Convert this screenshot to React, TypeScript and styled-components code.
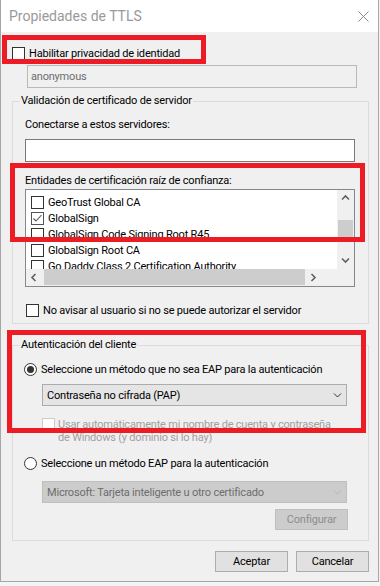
import React from 'react';
import styled, { createGlobalStyle } from 'styled-components';

const GlobalStyle = createGlobalStyle`
  * { box-sizing: border-box; }
  html, body { margin: 0; padding: 0; }
  body {
    background: #f4f4f4;
    font-family: Roboto, 'Liberation Sans', sans-serif;
    font-size: 11px;
    letter-spacing: -0.2px;
    color: #000;
  }
`;

const certs = [
  { name: 'GeoTrust Global CA', checked: false },
  { name: 'GlobalSign', checked: true },
  { name: 'GlobalSign Code Signing Root R45', checked: false },
  { name: 'GlobalSign Root CA', checked: false },
  { name: 'Go Daddy Class 2 Certification Authority', checked: false },
];

type Dir = 'up' | 'down' | 'left' | 'right';

const chevronPaths: Record<Dir, string> = {
  up: 'M1 5.5 L4.5 2 L8 5.5',
  down: 'M1 2.5 L4.5 6 L8 2.5',
  left: 'M5.5 1 L2 4.5 L5.5 8',
  right: 'M2.5 1 L6 4.5 L2.5 8',
};

const Chevron = ({ dir, color = '#606060', width = 1.6 }: { dir: Dir; color?: string; width?: number }) => (
  <svg width="9" height="9" viewBox="0 0 9 9">
    <path d={chevronPaths[dir]} fill="none" stroke={color} strokeWidth={width} />
  </svg>
);

const Check = ({ checked, disabled }: { checked?: boolean; disabled?: boolean }) => (
  <CheckBox $disabled={disabled} $checked={checked}>
    {checked && (
      <svg width="11" height="11" viewBox="0 0 11 11">
        <path d="M1.5 5.5 L4 8 L9.5 2" fill="none" stroke="#555" strokeWidth="1.1" />
      </svg>
    )}
  </CheckBox>
);

const App = () => {
  return (
    <>
      <GlobalStyle />
      <Window>
        <TitleBar>
          <Title>Propiedades de TTLS</Title>
          <CloseButton>
            <svg width="11" height="11" viewBox="0 0 11 11">
              <path d="M0.5 0.5 L10.5 10.5 M10.5 0.5 L0.5 10.5" stroke="#8a8a8a" strokeWidth="1" />
            </svg>
          </CloseButton>
        </TitleBar>

        <Body>
          <CheckRow $top={13}>
            <Check />
            <span>Habilitar privacidad de identidad</span>
          </CheckRow>
          <IdentityInput>anonymous</IdentityInput>

          <Group $top={5}>
            <Legend>Validación de certificado de servidor</Legend>
            <GroupContent $left={12} $bottom={5}>
              <Label $top={8}>Conectarse a estos servidores:</Label>
              <TextField />
              <Label $top={11}>Entidades de certificación raíz de confianza:</Label>
              <ListBox>
                <ListMain>
                  <Rows>
                    {certs.map((c) => (
                      <ListRow key={c.name}>
                        <Check checked={c.checked} />
                        <span>{c.name}</span>
                      </ListRow>
                    ))}
                  </Rows>
                  <VScroll>
                    <ArrowCell>
                      <Chevron dir="up" />
                    </ArrowCell>
                    <VTrack>
                      <VThumb />
                    </VTrack>
                    <ArrowCell>
                      <Chevron dir="down" />
                    </ArrowCell>
                  </VScroll>
                </ListMain>
                <HScroll>
                  <HArrow>
                    <Chevron dir="left" />
                  </HArrow>
                  <HThumb />
                  <HArrow>
                    <Chevron dir="right" />
                  </HArrow>
                  <Corner />
                </HScroll>
              </ListBox>
              <CheckRow $top={15} $indent={1}>
                <Check />
                <span>No avisar al usuario si no se puede autorizar el servidor</span>
              </CheckRow>
            </GroupContent>
          </Group>

          <Group $top={13}>
            <Legend>Autenticación del cliente</Legend>
            <GroupContent $left={11} $bottom={10}>
              <RadioRow $top={8}>
                <Radio $checked />
                <span>Seleccione un método que no sea EAP para la autenticación</span>
              </RadioRow>
              <Combo $top={7}>
                <span>Contraseña no cifrada (PAP)</span>
                <Chevron dir="down" color="#333" width={1} />
              </Combo>
              <DisabledRow>
                <Check disabled />
                <DisabledText>
                  Usar automáticamente mi nombre de cuenta y contraseña
                  <br />
                  de Windows (y dominio si lo hay)
                </DisabledText>
              </DisabledRow>
              <RadioRow $top={11}>
                <Radio />
                <span>Seleccione un método EAP para la autenticación</span>
              </RadioRow>
              <Combo $top={10} $disabled>
                <span>Microsoft: Tarjeta inteligente u otro certificado</span>
                <Chevron dir="down" color="#b5b5b5" width={1} />
              </Combo>
              <ConfigRow>
                <Button $disabled>Configurar</Button>
              </ConfigRow>
            </GroupContent>
          </Group>

          <Footer>
            <Button>Aceptar</Button>
            <Button>Cancelar</Button>
          </Footer>
        </Body>

        <Highlight style={{ left: 1, top: 35, width: 204, height: 29 }} />
        <Highlight style={{ left: 9, top: 163, width: 355, height: 79 }} />
        <Highlight style={{ left: 6, top: 330, width: 359, height: 103 }} />
      </Window>
    </>
  );
};

export default App;

const Window = styled.div`
  position: relative;
  width: 379px;
  height: 582px;
  background: #f0f0f0;
  border: 1px solid #a6a6a6;
  border-top: none;
`;

const TitleBar = styled.div`
  height: 32px;
  background: #fff;
  display: flex;
  align-items: center;
  justify-content: space-between;
  padding: 0 9px 0 8px;
`;

const Title = styled.div`
  font-size: 14px;
  letter-spacing: 0;
  color: #999;
  margin-top: -1px;
`;

const CloseButton = styled.div`
  display: flex;
  margin-top: 1px;
`;

const Body = styled.div`
  padding: 0 0 0 11px;
  display: flex;
  flex-direction: column;
`;

const CheckRow = styled.div<{ $top?: number; $indent?: number }>`
  display: flex;
  align-items: center;
  gap: 4px;
  height: 16px;
  margin-top: ${({ $top }) => $top ?? 0}px;
  margin-left: ${({ $indent }) => $indent ?? 0}px;
  white-space: nowrap;
`;

const CheckBox = styled.span<{ $disabled?: boolean; $checked?: boolean }>`
  width: 13px;
  height: 13px;
  flex: none;
  display: flex;
  align-items: center;
  justify-content: center;
  background: #fff;
  border: 1px solid ${({ $disabled, $checked }) => ($disabled ? '#cccccc' : $checked ? '#555' : '#333')};
`;

const IdentityInput = styled.div`
  width: 330px;
  height: 23px;
  margin: 4px 0 0 15px;
  padding: 0 3px;
  display: flex;
  align-items: center;
  border: 1px solid #b9b9b9;
  background: #f0f0f0;
  color: #6d6d6d;
`;

const Group = styled.fieldset<{ $top: number }>`
  width: 357px;
  margin: ${({ $top }) => $top}px 0 0 0;
  padding: 0;
  min-width: 0;
  border: 1px solid #dcdcdc;
`;

const Legend = styled.legend`
  margin-left: 7px;
  padding: 0 1px;
  line-height: 16px;
`;

const GroupContent = styled.div<{ $left: number; $bottom: number }>`
  display: flex;
  flex-direction: column;
  padding: 0 0 ${({ $bottom }) => $bottom}px ${({ $left }) => $left}px;
`;

const Label = styled.div<{ $top: number }>`
  margin-top: ${({ $top }) => $top}px;
  line-height: 16px;
`;

const TextField = styled.div`
  width: 330px;
  height: 23px;
  margin-top: 6px;
  background: #fff;
  border: 1px solid #7a7a7a;
`;

const ListBox = styled.div`
  width: 330px;
  height: 98px;
  border: 1px solid #828790;
  background: #fff;
  display: flex;
  flex-direction: column;
  overflow: hidden;
`;

const ListMain = styled.div`
  display: flex;
  height: 79px;
`;

const Rows = styled.div`
  flex: 1;
  padding-top: 4px;
  overflow: hidden;
`;

const ListRow = styled.div`
  display: flex;
  align-items: center;
  gap: 4px;
  height: 16px;
  padding-left: 5px;
  white-space: nowrap;
`;

const VScroll = styled.div`
  width: 17px;
  background: #f0f0f0;
  display: flex;
  flex-direction: column;
`;

const ArrowCell = styled.div`
  height: 17px;
  display: flex;
  align-items: center;
  justify-content: center;
`;

const VTrack = styled.div`
  flex: 1;
  padding: 13px 1px 0 1px;
`;

const VThumb = styled.div`
  height: 22px;
  background: #cdcdcd;
`;

const HScroll = styled.div`
  height: 17px;
  display: flex;
  background: #f0f0f0;
`;

const HArrow = styled.div`
  width: 17px;
  display: flex;
  align-items: center;
  justify-content: center;
`;

const HThumb = styled.div`
  width: 261px;
  margin: 0 0 1px 1px;
  background: #cdcdcd;
`;

const Corner = styled.div`
  width: 17px;
  margin-left: auto;
  background: #f0f0f0;
`;

const RadioRow = styled.div<{ $top: number }>`
  display: flex;
  align-items: center;
  gap: 4px;
  height: 16px;
  margin-top: ${({ $top }) => $top}px;
  white-space: nowrap;
`;

const Radio = styled.span<{ $checked?: boolean }>`
  width: 13px;
  height: 13px;
  flex: none;
  border-radius: 50%;
  border: 1px solid #333;
  background: #fff;
  display: flex;
  align-items: center;
  justify-content: center;
  &::after {
    content: '';
    display: ${({ $checked }) => ($checked ? 'block' : 'none')};
    width: 7px;
    height: 7px;
    border-radius: 50%;
    background: #333;
  }
`;

const Combo = styled.div<{ $top: number; $disabled?: boolean }>`
  width: 305px;
  height: 22px;
  margin: ${({ $top }) => $top}px 0 0 18px;
  padding: 0 4px 0 4px;
  display: flex;
  align-items: center;
  justify-content: space-between;
  background: ${({ $disabled }) => ($disabled ? '#cccccc' : '#e5e5e5')};
  border: 1px solid ${({ $disabled }) => ($disabled ? '#bfbfbf' : '#acacac')};
  color: ${({ $disabled }) => ($disabled ? '#6d6d6d' : '#000')};
`;

const DisabledRow = styled.div`
  display: flex;
  align-items: flex-start;
  gap: 3px;
  margin: 12px 0 0 18px;
`;

const DisabledText = styled.div`
  line-height: 13px;
  color: #a0a0a0;
  white-space: nowrap;
`;

const ConfigRow = styled.div`
  display: flex;
  justify-content: flex-end;
  width: 324px;
  margin-top: 6px;
`;

const Button = styled.div<{ $disabled?: boolean }>`
  width: 73px;
  height: 21px;
  display: flex;
  align-items: center;
  justify-content: center;
  background: ${({ $disabled }) => ($disabled ? '#cccccc' : '#e1e1e1')};
  border: 1px solid ${({ $disabled }) => ($disabled ? '#bfbfbf' : '#adadad')};
  color: ${({ $disabled }) => ($disabled ? '#8c8c8c' : '#000')};
`;

const Footer = styled.div`
  display: flex;
  justify-content: flex-end;
  gap: 8px;
  width: 357px;
  margin-top: 10px;
`;

const Highlight = styled.div`
  position: absolute;
  border: 5px solid #ed1c24;
  pointer-events: none;
`;
